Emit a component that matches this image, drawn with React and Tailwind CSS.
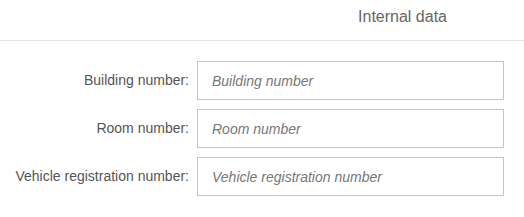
export default function App() {
  const fields = [
    { label: "Building number:", placeholder: "Building number" },
    { label: "Room number:", placeholder: "Room number" },
    { label: "Vehicle registration number:", placeholder: "Vehicle registration number" },
  ];

  return (
    <div className="w-[524px] h-[217px] bg-white font-['Liberation_Sans',Arial,sans-serif] text-[14px]">
      <div className="h-[41px] flex items-center justify-end pr-[77px] border-b border-[#dfe4e6] text-[#666] text-[16px] pb-[6px]">
        Internal data
      </div>
      <div className="flex flex-col gap-[9px] pt-[20px]">
        {fields.map((f) => (
          <div key={f.label} className="flex items-center">
            <label className="w-[197px] text-right text-[#555] pr-[8px] shrink-0">{f.label}</label>
            <input
              type="text"
              placeholder={f.placeholder}
              className="w-[307px] h-[39px] border border-[#c4c4c4] px-[14px] italic text-[#555] placeholder:text-[#777] outline-none"
            />
          </div>
        ))}
      </div>
    </div>
  );
}
